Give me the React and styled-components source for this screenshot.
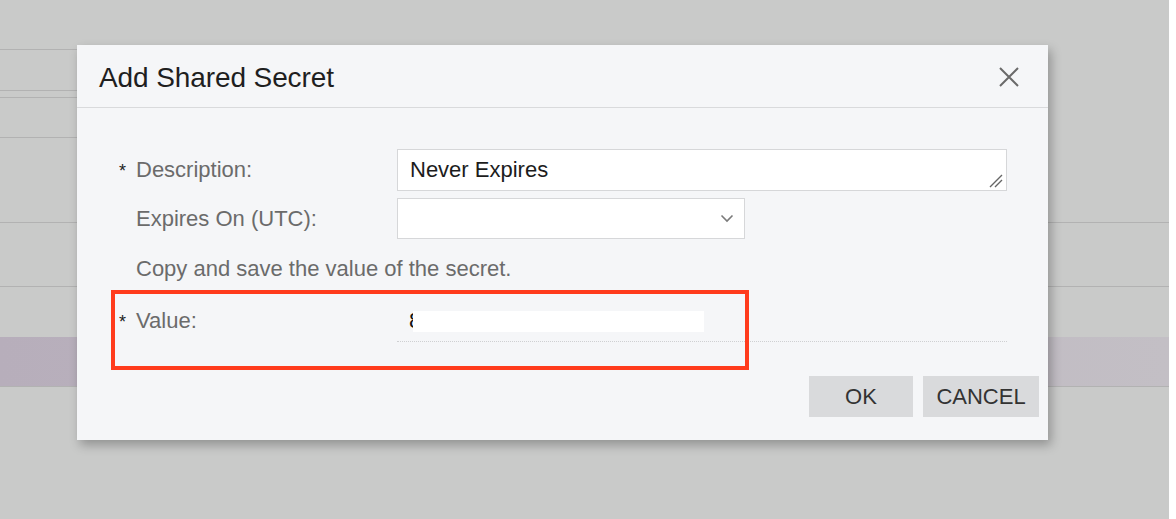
import React from "react";
import styled, { createGlobalStyle } from "styled-components";

const GlobalStyle = createGlobalStyle`
  html, body {
    margin: 0;
    padding: 0;
    background: #ffffff;
    font-family: "Liberation Sans", Arial, sans-serif;
  }
`;

const rows = [
  { h: 50, line: "short" },
  { h: 41, line: "short" },
  { h: 7, line: "short" },
  { h: 40, line: "short" },
  { h: 85, line: "full" },
  { h: 64, line: "full" },
  { h: 50, line: "none" },
  { h: 50, line: "full", band: true },
];

const Page = styled.div`
  position: relative;
  width: 100%;
  height: 519px;
  overflow: hidden;
  display: flex;
`;

const Shade = styled.div`
  width: 1169px;
  height: 100%;
  background: #c9cac9;
  display: flex;
  flex-direction: column;
`;

const BgRow = styled.div`
  flex: 0 0 ${(p) => p.$h}px;
  box-sizing: border-box;
  background: ${(p) =>
    p.$band ? "linear-gradient(90deg, #b7aebb 0%, #bdb6c0 50%, #c3bfc5 100%)" : "transparent"};
  border-bottom: ${(p) => (p.$line === "full" ? "1px solid #b2b2b2" : "none")};
  display: flex;
  flex-direction: column;
  justify-content: flex-end;
`;

const ShortLine = styled.div`
  width: 300px;
  height: 1px;
  background: #b2b2b2;
`;

const Dialog = styled.div`
  position: absolute;
  left: 77px;
  top: 45px;
  width: 971px;
  height: 395px;
  background: #f5f6f8;
  box-shadow: 3px 5px 10px rgba(0, 0, 0, 0.28);
  display: flex;
  flex-direction: column;
`;

const Header = styled.div`
  height: 63px;
  box-sizing: border-box;
  border-bottom: 1px solid #d9dadc;
  display: flex;
  align-items: center;
  justify-content: space-between;
  padding: 0 28px 0 22px;
`;

const Title = styled.h1`
  margin: 0;
  font-size: 28px;
  font-weight: normal;
  color: #1f1f1f;
  letter-spacing: -0.1px;
  padding-top: 3px;
`;

const CloseButton = styled.button`
  border: 0;
  background: transparent;
  padding: 0;
  width: 22px;
  height: 22px;
  display: flex;
  align-items: center;
  justify-content: center;
  cursor: pointer;
  margin-top: 2px;
`;

const Body = styled.div`
  flex: 1;
  display: flex;
  flex-direction: column;
  padding: 41px 41px 0 42px;
`;

const FieldRow = styled.div`
  display: flex;
  align-items: center;
  margin-top: ${(p) => p.$gap || 0}px;
`;

const Label = styled.div`
  width: 278px;
  flex: 0 0 278px;
  display: flex;
  align-items: center;
  font-size: 22px;
  color: #6b6b6b;
`;

const Star = styled.span`
  width: 17px;
  flex: 0 0 17px;
  font-size: 18px;
  color: #222;
  position: relative;
  top: 1px;
`;

const Input = styled.div`
  position: relative;
  box-sizing: border-box;
  width: ${(p) => p.$w}px;
  height: ${(p) => p.$h}px;
  background: #ffffff;
  border: 1px solid #d6d7d9;
  display: flex;
  align-items: center;
  padding: 0 12px;
  font-size: 22px;
  color: #1c1c1c;
`;

const Corner = styled.svg`
  position: absolute;
  right: 3px;
  bottom: 2px;
`;

const Chevron = styled.svg`
  margin-left: auto;
  margin-right: -2px;
`;

const Note = styled.div`
  margin-top: 15px;
  line-height: 30px;
  font-size: 22px;
  color: #6b6b6b;
  padding-left: 17px;
`;

const ValueField = styled.div`
  box-sizing: border-box;
  width: 610px;
  height: 42px;
  border-bottom: 1px dotted #cfd0d2;
  display: flex;
  align-items: center;
  padding-left: 12px;
  font-size: 22px;
  color: #111;
`;

const Masked = styled.span`
  display: inline-block;
  width: 291px;
  height: 21px;
  background: #ffffff;
  margin-left: -8px;
  position: relative;
  top: 1px;
`;

const Footer = styled.div`
  display: flex;
  justify-content: flex-end;
  gap: 10px;
  margin: 34px -32px 0 0;
`;

const Button = styled.button`
  box-sizing: border-box;
  width: ${(p) => p.$w}px;
  height: 41px;
  border: 0;
  background: #d9dadc;
  font-family: "Liberation Sans", Arial, sans-serif;
  font-size: 22px;
  color: #333;
  padding: 0;
  cursor: pointer;
`;

const Annotation = styled.div`
  position: absolute;
  left: 34px;
  top: 245px;
  width: 638px;
  height: 80px;
  box-sizing: border-box;
  border: 4px solid #ff3b1c;
  pointer-events: none;
`;

export default function App() {
  return (
    <>
      <GlobalStyle />
      <Page>
        <Shade>
          {rows.map((r, i) => (
            <BgRow key={i} $h={r.h} $line={r.line} $band={r.band}>
              {r.line === "short" && <ShortLine />}
            </BgRow>
          ))}
        </Shade>

        <Dialog>
          <Header>
            <Title>Add Shared Secret</Title>
            <CloseButton aria-label="Close">
              <svg width="22" height="22" viewBox="0 0 22 22">
                <path d="M2 2 L20 20 M20 2 L2 20" stroke="#6a6a6a" strokeWidth="2" fill="none" />
              </svg>
            </CloseButton>
          </Header>

          <Body>
            <FieldRow>
              <Label>
                <Star>*</Star>Description:
              </Label>
              <Input $w={610} $h={42}>
                Never Expires
                <Corner width="14" height="14" viewBox="0 0 14 14">
                  <path d="M1 13 L13 1 M6 13 L13 6" stroke="#666" strokeWidth="1.4" fill="none" />
                </Corner>
              </Input>
            </FieldRow>

            <FieldRow $gap={7}>
              <Label>
                <Star />Expires On (UTC):
              </Label>
              <Input $w={348} $h={41}>
                <Chevron width="14" height="9" viewBox="0 0 14 9">
                  <path d="M1.5 1.5 L7 7 L12.5 1.5" stroke="#7a7a7a" strokeWidth="1.6" fill="none" />
                </Chevron>
              </Input>
            </FieldRow>

            <Note>Copy and save the value of the secret.</Note>

            <FieldRow $gap={16}>
              <Label>
                <Star>*</Star>Value:
              </Label>
              <ValueField>
                8<Masked />
              </ValueField>
            </FieldRow>

            <Footer>
              <Button $w={104}>OK</Button>
              <Button $w={116}>CANCEL</Button>
            </Footer>
          </Body>

          <Annotation />
        </Dialog>
      </Page>
    </>
  );
}
